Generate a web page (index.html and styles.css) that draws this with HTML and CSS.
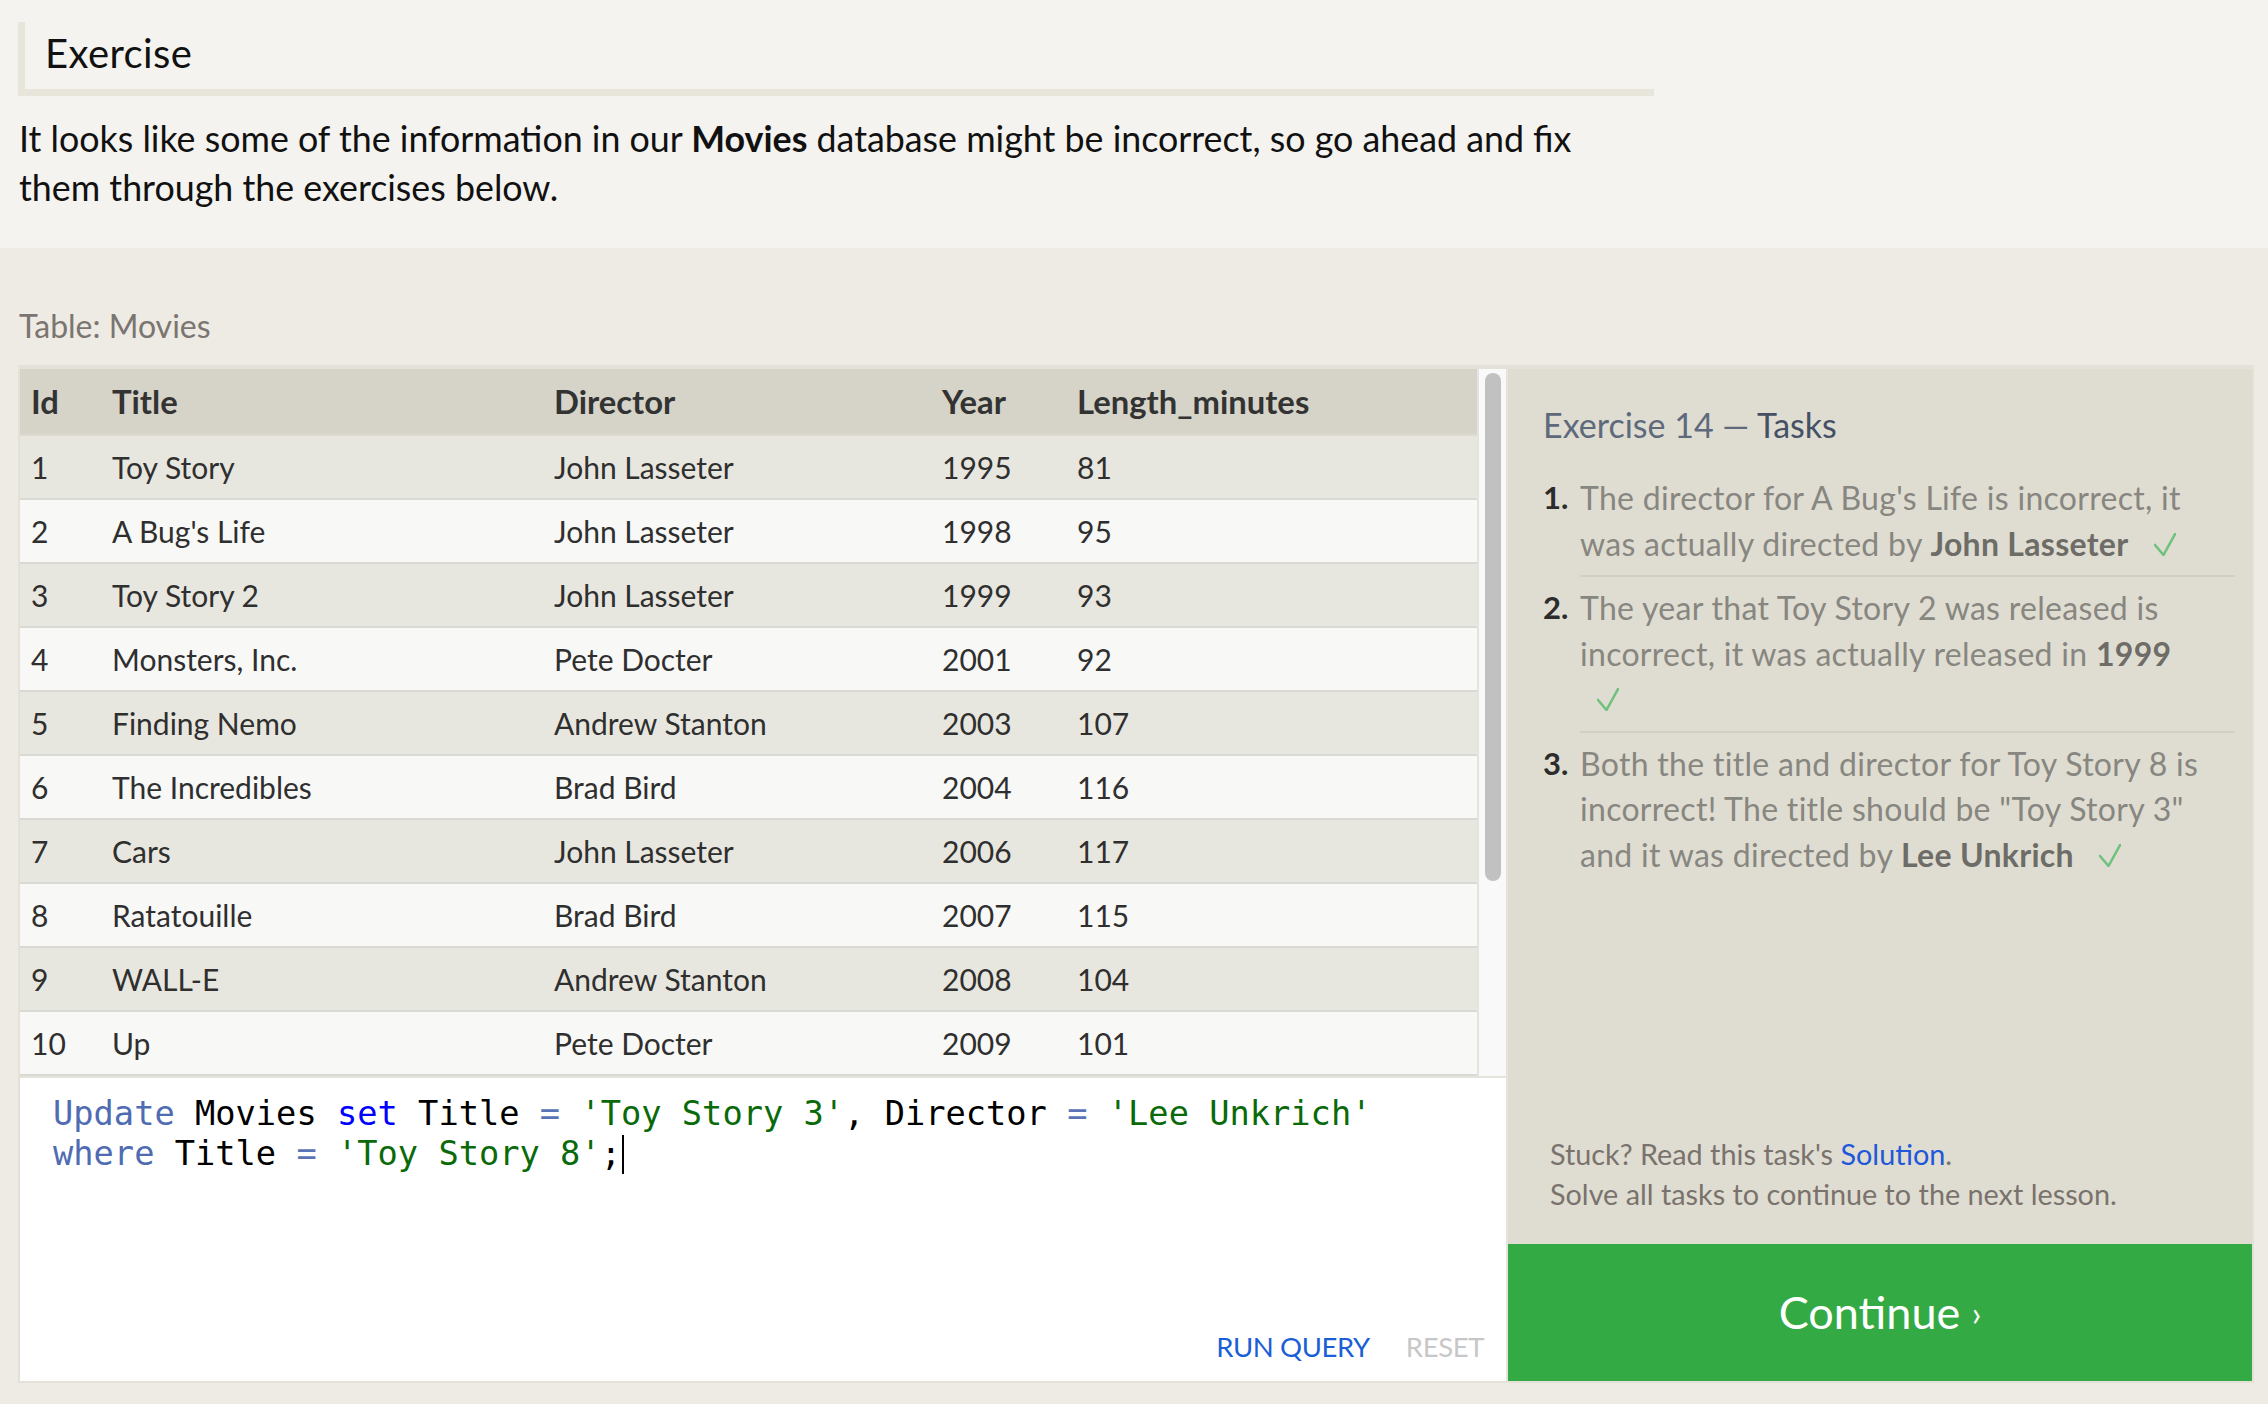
FILE: index.html
```html
<!DOCTYPE html>
<html>
<head>
<meta charset="utf-8">
<title>Exercise 14</title>
<link rel="stylesheet" href="styles.css">
</head>
<body>
<section class="intro">
  <h1 class="intro-title">Exercise</h1>
  <p class="intro-text">It looks like some of the information in our <strong>Movies</strong> database might be incorrect, so go ahead and fix them through the exercises below.</p>
</section>
<section class="lesson">
  <div class="table-label">Table: Movies</div>
  <div class="workspace">
    <div class="left-col">
      <div class="table-area">
        <table class="movies">
          <colgroup>
            <col class="c-id"><col class="c-title"><col class="c-dir"><col class="c-year"><col class="c-len">
          </colgroup>
          <thead>
            <tr><th>Id</th><th>Title</th><th>Director</th><th>Year</th><th>Length_minutes</th></tr>
          </thead>
          <tbody>
            <tr><td>1</td><td>Toy Story</td><td>John Lasseter</td><td>1995</td><td>81</td></tr>
            <tr><td>2</td><td>A Bug's Life</td><td>John Lasseter</td><td>1998</td><td>95</td></tr>
            <tr><td>3</td><td>Toy Story 2</td><td>John Lasseter</td><td>1999</td><td>93</td></tr>
            <tr><td>4</td><td>Monsters, Inc.</td><td>Pete Docter</td><td>2001</td><td>92</td></tr>
            <tr><td>5</td><td>Finding Nemo</td><td>Andrew Stanton</td><td>2003</td><td>107</td></tr>
            <tr><td>6</td><td>The Incredibles</td><td>Brad Bird</td><td>2004</td><td>116</td></tr>
            <tr><td>7</td><td>Cars</td><td>John Lasseter</td><td>2006</td><td>117</td></tr>
            <tr><td>8</td><td>Ratatouille</td><td>Brad Bird</td><td>2007</td><td>115</td></tr>
            <tr><td>9</td><td>WALL-E</td><td>Andrew Stanton</td><td>2008</td><td>104</td></tr>
            <tr><td>10</td><td>Up</td><td>Pete Docter</td><td>2009</td><td>101</td></tr>
          </tbody>
        </table>
        <div class="scroll-track"><div class="scroll-thumb"></div></div>
      </div>
      <div class="editor">
        <div class="code">
          <div class="code-line"><span class="kw">Update</span> Movies <span class="kw-set">set</span> Title <span class="op">=</span> <span class="str">'Toy Story 3'</span>, Director <span class="op">=</span> <span class="str">'Lee Unkrich'</span></div>
          <div class="code-line"><span class="kw">where</span> Title <span class="op">=</span> <span class="str">'Toy Story 8'</span>;<span class="cursor"></span></div>
        </div>
        <div class="editor-actions">
          <span class="run-query">RUN QUERY</span>
          <span class="reset">RESET</span>
        </div>
      </div>
    </div>
    <aside class="tasks-panel">
      <div class="tasks-body">
        <h2 class="tasks-title">Exercise 14 — <span class="tasks-word">Tasks</span></h2>
        <ol class="task-list">
          <li class="task">
            <span class="task-num">1.</span>
            <span class="task-text">The director for A Bug's Life is incorrect, it was actually directed by <strong>John Lasseter</strong> <svg class="check" width="22" height="23" viewBox="0 0 22 23"><polyline points="1,12 9.5,22 21,1" /></svg></span>
          </li>
          <li class="task">
            <span class="task-num">2.</span>
            <span class="task-text">The year that Toy Story 2 was released is incorrect, it was actually released in <strong>1999</strong> <svg class="check" width="22" height="23" viewBox="0 0 22 23"><polyline points="1,12 9.5,22 21,1" /></svg></span>
          </li>
          <li class="task">
            <span class="task-num">3.</span>
            <span class="task-text last">Both the title and director for Toy Story 8 is incorrect! The title should be "Toy Story 3" and it was directed by <strong>Lee Unkrich</strong> <svg class="check" width="22" height="23" viewBox="0 0 22 23"><polyline points="1,12 9.5,22 21,1" /></svg></span>
          </li>
        </ol>
        <div class="stuck">
          <div>Stuck? Read this task's <span class="solution">Solution</span>.</div>
          <div>Solve all tasks to continue to the next lesson.</div>
        </div>
      </div>
      <div class="continue">Continue <span class="chev">›</span></div>
    </aside>
  </div>
</section>
</body>
</html>
```

FILE: styles.css
```css
html, body {
  margin: 0;
  padding: 0;
}

body {
  background: #eeeae4;
  font-family: Lato, "Open Sans", sans-serif;
  color: #111;
  width: 2268px;
  height: 1404px;
  overflow: hidden;
}

/* ---------- intro ---------- */
.intro {
  background: #f4f3ef;
  height: 248px;
  box-sizing: border-box;
  padding: 22px 0 0 18px;
}

.intro-title {
  margin: 0;
  width: 1636px;
  box-sizing: border-box;
  height: 74px;
  border-left: 7px solid #e8e6da;
  border-bottom: 7px solid #e8e6da;
  padding-left: 20px;
  font-size: 40px;
  letter-spacing: 0.4px;
  font-weight: normal;
  line-height: 62px;
  color: #111;
}

.intro-text {
  margin: 18px 0 0 1px;
  width: 1600px;
  font-size: 35.8px;
  line-height: 49px;
  color: #111;
}

.intro-text strong {
  font-weight: bold;
}

/* ---------- lesson ---------- */
.lesson {
  padding-top: 58px;
}

.table-label {
  margin-left: 19px;
  height: 40px;
  line-height: 40px;
  font-size: 32px;
  color: #7a7570;
  margin-bottom: 19px;
}

.workspace {
  margin-left: 18px;
  width: 2236px;
  box-sizing: border-box;
  border-style: solid;
  border-color: #e3e1d8;
  border-width: 4px 2px 2px 2px;
  display: flex;
}

.left-col {
  width: 1488px;
  box-sizing: border-box;
  border-right: 2px solid #e5e3db;
  display: flex;
  flex-direction: column;
}

.table-area {
  display: flex;
  height: 707px;
}

.movies {
  width: 1457px;
  flex: none;
  table-layout: fixed;
  border-collapse: separate;
  border-spacing: 0;
  font-size: 30px;
  color: #2f2f2f;
}

.c-id { width: 81px; }
.c-title { width: 442px; }
.c-dir { width: 388px; }
.c-year { width: 135px; }
.c-len { width: auto; }

.movies th {
  background: #d6d4c8;
  text-align: left;
  font-weight: bold;
  font-size: 32.8px;
  line-height: 65px;
  padding: 0 0 0 11px;
  border-bottom: 2px solid #dcdad3;
  color: #333;
  white-space: nowrap;
}

.movies td {
  line-height: 62px;
  padding: 0 0 0 11px;
  border-bottom: 2px solid #dadad5;
  white-space: nowrap;
}

.movies tbody tr:nth-child(odd) td {
  background: #e8e7df;
}

.movies tbody tr:nth-child(even) td {
  background: #f8f8f7;
}

.scroll-track {
  flex: none;
  width: 21px;
  border-left: 2px solid #e3e3e0;
  background: #f9f9f9;
  padding: 4px 0 0 6px;
}

.scroll-thumb {
  width: 16px;
  height: 508px;
  border-radius: 8px;
  background: #c1c1c1;
}

.editor {
  background: #fff;
  border-top: 2px solid #e4e4dc;
  height: 303px;
  display: flex;
  flex-direction: column;
}

.code {
  flex: 1;
  padding: 16px 33px 0 33px;
  font-family: "DejaVu Sans Mono", monospace;
  font-size: 33.7px;
  line-height: 40px;
  color: #000;
}

.code-line {
  white-space: pre;
}

.kw { color: #4f6cb3; }
.kw-set { color: #0000ff; }
.op { color: #5a75b5; }
.str { color: #0a6a0a; }

.cursor {
  display: inline-block;
  width: 2px;
  height: 39px;
  background: #000;
  vertical-align: -9px;
  margin-left: 1px;
}

.editor-actions {
  display: flex;
  justify-content: flex-end;
  gap: 36px;
  padding: 0 22px 16px 0;
  font-size: 27.5px;
  letter-spacing: -0.4px;
  line-height: 36px;
}

.run-query { color: #1b5fd6; }
.reset { color: #c7c7c7; }

/* ---------- tasks panel ---------- */
.tasks-panel {
  width: 744px;
  background: #dfddd1;
  display: flex;
  flex-direction: column;
}

.tasks-body {
  flex: 1;
  display: flex;
  flex-direction: column;
  padding: 35px 17px 0 35px;
}

.tasks-title {
  margin: 0;
  font-size: 34px;
  line-height: 42px;
  font-weight: normal;
  color: #5f697c;
}

.tasks-word {
  color: #465064;
}

.task-list {
  list-style: none;
  margin: 21px 0 0 0;
  padding: 0;
}

.task {
  display: grid;
  grid-template-columns: 37px 1fr;
  font-size: 32px;
  line-height: 45.5px;
}

.task-num {
  padding-top: 8px;
  font-weight: bold;
  font-size: 31px;
  color: #2c2c2c;
}

.task-text {
  padding: 8px 0 9px 0;
  color: #878680;
  letter-spacing: 0.3px;
  border-bottom: 2px solid #d2d0c4;
}

.task-text.last {
  border-bottom: none;
}

.task-text strong {
  color: #6d6c67;
}

.check {
  margin: 0 30px 0 17px;
  vertical-align: baseline;
  fill: none;
  stroke: #6fc27e;
  stroke-width: 2.6;
  stroke-linejoin: round;
  stroke-linecap: round;
}

.stuck {
  margin-top: auto;
  padding: 0 0 30px 7px;
  font-size: 28.8px;
  line-height: 40px;
  color: #7a726d;
}

.solution {
  color: #1f58d8;
}

.continue {
  height: 137px;
  background: #34aa44;
  color: #fff;
  font-size: 45px;
  line-height: 137px;
  text-align: center;
}

.chev {
  font-size: 34px;
  vertical-align: 3px;
}
```
